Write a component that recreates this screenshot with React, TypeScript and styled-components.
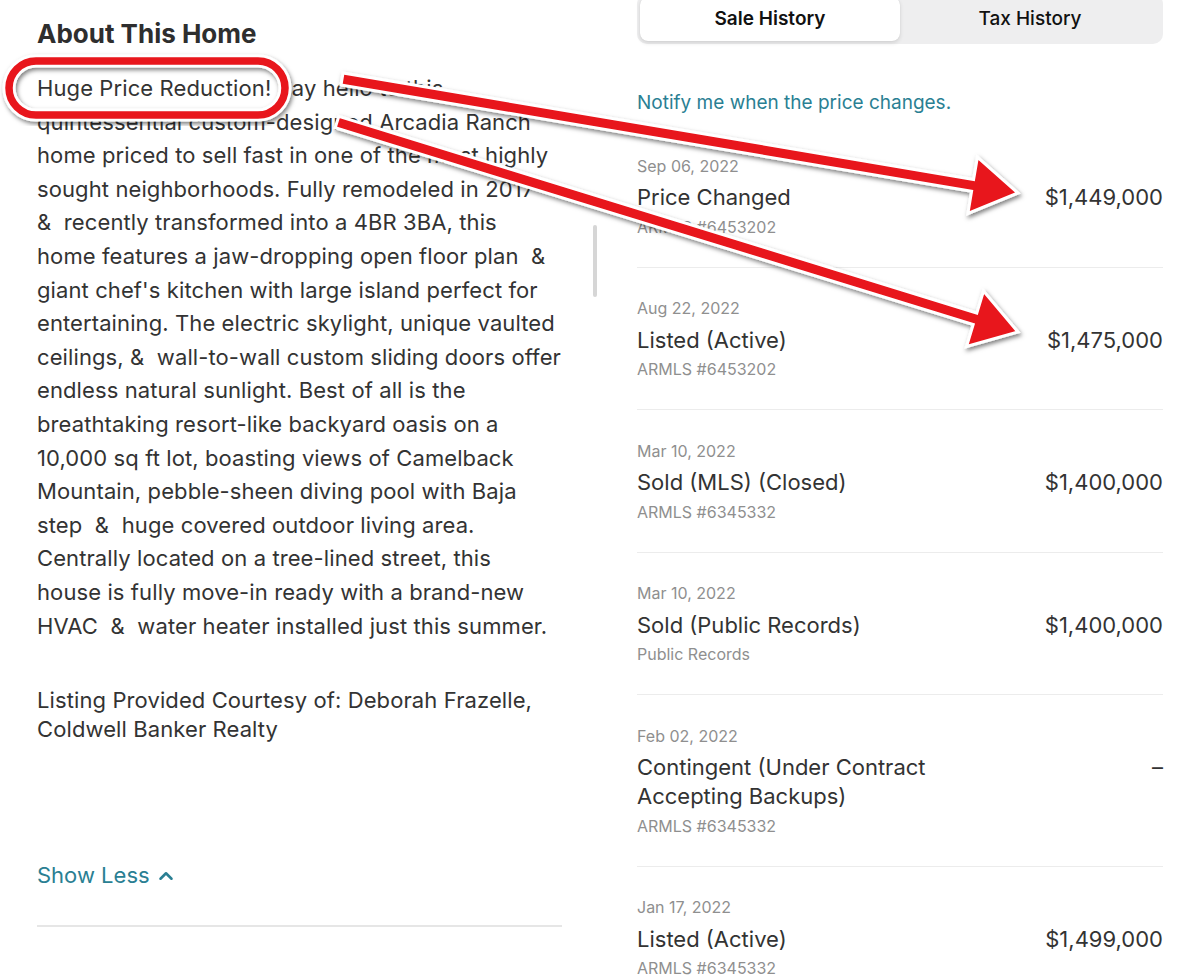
import React from "react";
import styled, { createGlobalStyle } from "styled-components";
import { ChevronUp } from "lucide-react";

const GlobalStyle = createGlobalStyle`
  html, body {
    margin: 0;
    padding: 0;
    background: #fff;
  }
  body {
    font-family: Inter, "Open Sans", "Liberation Sans", sans-serif;
    color: #333;
    -webkit-font-smoothing: antialiased;
  }
`;

const DESCRIPTION = [
  "Huge Price Reduction! Say hello to this",
  "quintessential custom-designed Arcadia Ranch",
  "home priced to sell fast in one of the most highly",
  "sought neighborhoods. Fully remodeled in 2017",
  "&  recently transformed into a 4BR 3BA, this",
  "home features a jaw-dropping open floor plan  &",
  "giant chef's kitchen with large island perfect for",
  "entertaining. The electric skylight, unique vaulted",
  "ceilings, &  wall-to-wall custom sliding doors offer",
  "endless natural sunlight. Best of all is the",
  "breathtaking resort-like backyard oasis on a",
  "10,000 sq ft lot, boasting views of Camelback",
  "Mountain, pebble-sheen diving pool with Baja",
  "step  &  huge covered outdoor living area.",
  "Centrally located on a tree-lined street, this",
  "house is fully move-in ready with a brand-new",
  "HVAC  &  water heater installed just this summer.",
];

type HistoryEvent = {
  date: string;
  title: string[];
  source: string;
  price: string;
};

const EVENTS: HistoryEvent[] = [
  { date: "Sep 06, 2022", title: ["Price Changed"], source: "ARMLS #6453202", price: "$1,449,000" },
  { date: "Aug 22, 2022", title: ["Listed (Active)"], source: "ARMLS #6453202", price: "$1,475,000" },
  { date: "Mar 10, 2022", title: ["Sold (MLS) (Closed)"], source: "ARMLS #6345332", price: "$1,400,000" },
  { date: "Mar 10, 2022", title: ["Sold (Public Records)"], source: "Public Records", price: "$1,400,000" },
  {
    date: "Feb 02, 2022",
    title: ["Contingent (Under Contract", "Accepting Backups)"],
    source: "ARMLS #6345332",
    price: "–",
  },
  { date: "Jan 17, 2022", title: ["Listed (Active)"], source: "ARMLS #6345332", price: "$1,499,000" },
];

type Pt = [number, number];

// builds the outline of a flat arrow from tail to tip
const arrowPoints = (tail: Pt, tip: Pt, shaft: number, head: number, headLen: number) => {
  const dx = tip[0] - tail[0];
  const dy = tip[1] - tail[1];
  const len = Math.hypot(dx, dy);
  const ux = dx / len;
  const uy = dy / len;
  const nx = -uy;
  const ny = ux;
  const bx = tip[0] - ux * headLen;
  const by = tip[1] - uy * headLen;
  const pts: Pt[] = [
    [tail[0] + nx * shaft, tail[1] + ny * shaft],
    [bx + nx * shaft, by + ny * shaft],
    [bx + nx * head, by + ny * head],
    tip,
    [bx - nx * head, by - ny * head],
    [bx - nx * shaft, by - ny * shaft],
    [tail[0] - nx * shaft, tail[1] - ny * shaft],
  ];
  return pts.map(p => `${p[0].toFixed(1)},${p[1].toFixed(1)}`).join(" ");
};

const Annotations = () => (
  <Overlay width="1200" height="976" viewBox="0 0 1200 976">
    <defs>
      <filter id="shadow" x="-5%" y="-20%" width="110%" height="140%">
        <feDropShadow dx="1.5" dy="2.5" stdDeviation="2" floodColor="#000" floodOpacity="0.5" />
      </filter>
    </defs>
    <g filter="url(#shadow)">
      <rect x="9" y="61" width="276" height="54" rx="27" fill="none" stroke="#fff" strokeWidth="13" />
      <rect x="9" y="61" width="276" height="54" rx="27" fill="none" stroke="#e8141b" strokeWidth="7.5" />
    </g>
    <g filter="url(#shadow)">
      <polygon
        points={arrowPoints([337, 122], [1018, 332], 6, 29, 45)}
        fill="#e8141b"
        stroke="#fff"
        strokeWidth="3"
        strokeLinejoin="miter"
      />
    </g>
    <g filter="url(#shadow)">
      <polygon
        points={arrowPoints([342, 79], [1018, 193], 6, 28.5, 46)}
        fill="#e8141b"
        stroke="#fff"
        strokeWidth="3"
        strokeLinejoin="miter"
      />
    </g>
  </Overlay>
);

const HistoryRow = ({ event }: { event: HistoryEvent }) => (
  <Row>
    <RowText>
      <DateLabel>{event.date}</DateLabel>
      <EventTitle>
        {event.title.map(line => (
          <Line key={line}>{line}</Line>
        ))}
      </EventTitle>
      <Source>{event.source}</Source>
    </RowText>
    <Price>{event.price}</Price>
  </Row>
);

export default function App() {
  return (
    <Page>
      <GlobalStyle />
      <Columns>
        <AboutColumn>
          <Heading>About This Home</Heading>
          <Description>
            {DESCRIPTION.map((line, i) => (
              <Line key={i}>{line}</Line>
            ))}
          </Description>
          <Courtesy>
            <Line>Listing Provided Courtesy of: Deborah Frazelle,</Line>
            <Line>Coldwell Banker Realty</Line>
          </Courtesy>
          <ShowLess>
            Show Less
            <ChevronUp size={22} strokeWidth={2.8} />
          </ShowLess>
          <Divider />
          <ScrollIndicator />
        </AboutColumn>

        <HistoryColumn>
          <Segmented>
            <Segment active>Sale History</Segment>
            <Segment>Tax History</Segment>
          </Segmented>
          <Notify>Notify me when the price changes.</Notify>
          <HistoryList>
            {EVENTS.map((ev, i) => (
              <HistoryRow key={i} event={ev} />
            ))}
          </HistoryList>
        </HistoryColumn>
      </Columns>
      <Annotations />
    </Page>
  );
}

const Page = styled.div`
  position: relative;
  width: 1200px;
  height: 976px;
  overflow: hidden;
  background: #fff;
`;

const Columns = styled.div`
  display: grid;
  grid-template-columns: 525px 526px;
  column-gap: 75px;
  padding: 0 37px;
`;

const AboutColumn = styled.section`
  position: relative;
  padding-top: 18px;
`;

const Heading = styled.h2`
  margin: 0;
  font-size: 26px;
  line-height: 32px;
  font-weight: 700;
  color: #2e2e2e;
  letter-spacing: 0;
`;

const Line = styled.span`
  display: block;
  white-space: pre;
`;

const Description = styled.div`
  margin-top: 22px;
  font-size: 22px;
  line-height: 33.6px;
  letter-spacing: 0.1px;
  color: #333;
`;

const Courtesy = styled.div`
  margin-top: 43px;
  font-size: 22px;
  line-height: 29px;
  letter-spacing: 0.1px;
  color: #333;
`;

const ShowLess = styled.div`
  margin-top: 117px;
  display: flex;
  align-items: center;
  gap: 5px;
  font-size: 22px;
  line-height: 29px;
  color: #2a7f93;
`;

const Divider = styled.div`
  margin-top: 35px;
  height: 2px;
  background: #e6e6e6;
`;

const ScrollIndicator = styled.div`
  position: absolute;
  left: 556px;
  top: 225px;
  width: 4px;
  height: 72px;
  border-radius: 2px;
  background: #d6d6d6;
`;

const HistoryColumn = styled.section`
  margin-top: -6px;
`;

const Segmented = styled.div`
  display: grid;
  grid-template-columns: 1fr 1fr;
  padding: 3px;
  height: 50px;
  box-sizing: border-box;
  border-radius: 10px;
  background: #eeeeef;
`;

const Segment = styled.div<{ active?: boolean }>`
  display: flex;
  align-items: center;
  justify-content: center;
  padding-bottom: 2px;
  border-radius: 8px;
  font-size: 19px;
  font-weight: ${({ active }) => (active ? 600 : 500)};
  color: #111;
  background: ${({ active }) => (active ? "#fff" : "transparent")};
  box-shadow: ${({ active }) => (active ? "0 2px 4px rgba(0,0,0,0.12), 0 0 1px rgba(0,0,0,0.1)" : "none")};
`;

const Notify = styled.div`
  margin-top: 47px;
  font-size: 19px;
  line-height: 24px;
  color: #2a7f93;
`;

const HistoryList = styled.div`
  margin-top: 10px;
`;

const Row = styled.div`
  display: flex;
  justify-content: space-between;
  align-items: flex-start;
  padding: 30.5px 0 30px;
  border-bottom: 1px solid #ececec;
`;

const RowText = styled.div`
  display: flex;
  flex-direction: column;
`;

const DateLabel = styled.div`
  font-size: 16px;
  line-height: 20px;
  color: #8f8f8f;
`;

const EventTitle = styled.div`
  margin-top: 7.5px;
  font-size: 22px;
  line-height: 29px;
  color: #333;
`;

const Source = styled.div`
  margin-top: 4.5px;
  font-size: 16px;
  line-height: 20px;
  color: #8f8f8f;
`;

const Price = styled.div`
  margin-top: 27.5px;
  font-size: 22px;
  line-height: 29px;
  color: #333;
`;

const Overlay = styled.svg`
  position: absolute;
  left: 0;
  top: 0;
  pointer-events: none;
`;
